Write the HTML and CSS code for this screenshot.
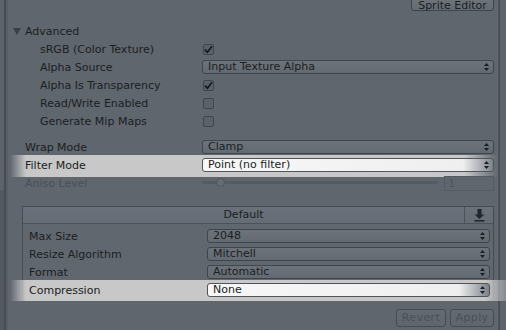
FILE: index.html
```html
<!DOCTYPE html>
<html>
<head>
<meta charset="utf-8">
<link rel="stylesheet" href="styles.css">
</head>
<body>
<div class="gutter-l"><div class="gl-top"></div><div class="gl-bot"></div></div>
<main class="inspector">
  <div class="topbar"><button class="btn sprite-btn">Sprite Editor</button></div>

  <div class="foldout"><span class="tri"></span>Advanced</div>
  <div class="row ind"><span class="lbl">sRGB (Color Texture)</span><span class="chk"><svg width="9" height="9" viewBox="0 0 9 9"><path d="M1 4.6 L3.4 7.2 L8 1.2" fill="none" stroke="#15181b" stroke-width="1.7"/></svg></span></div>
  <div class="row ind"><span class="lbl">Alpha Source</span><span class="dd">Input Texture Alpha<svg class="arr" width="5" height="8" viewBox="0 0 5 8"><path d="M0 3 L2.5 0 L5 3Z M0 5 L5 5 L2.5 8Z" fill="#1b1e22"/></svg></span></div>
  <div class="row ind"><span class="lbl">Alpha Is Transparency</span><span class="chk"><svg width="9" height="9" viewBox="0 0 9 9"><path d="M1 4.6 L3.4 7.2 L8 1.2" fill="none" stroke="#15181b" stroke-width="1.7"/></svg></span></div>
  <div class="row ind"><span class="lbl">Read/Write Enabled</span><span class="chk"></span></div>
  <div class="row ind"><span class="lbl">Generate Mip Maps</span><span class="chk"></span></div>

  <div class="row gap"><span class="lbl">Wrap Mode</span><span class="dd">Clamp<svg class="arr" width="5" height="8" viewBox="0 0 5 8"><path d="M0 3 L2.5 0 L5 3Z M0 5 L5 5 L2.5 8Z" fill="#1b1e22"/></svg></span></div>
  <div class="row hl"><span class="lbl">Filter Mode</span><span class="dd">Point (no filter)<svg class="arr" width="5" height="8" viewBox="0 0 5 8"><path d="M0 3 L2.5 0 L5 3Z M0 5 L5 5 L2.5 8Z" fill="#1b1e22"/></svg></span></div>
  <div class="row dis"><span class="lbl">Aniso Level</span><span class="slider"><span class="track"></span><span class="thumb"></span></span><span class="num">1</span></div>

  <section class="platform">
    <div class="ph"><span class="ph-title">Default</span><span class="ph-btn"><svg width="11" height="13" viewBox="0 0 11 13"><path d="M3.5 0 H7.5 V5.5 H10.5 L5.5 10 L0.5 5.5 H3.5Z" fill="#22262b"/><rect x="0.5" y="11" width="10" height="1.6" fill="#22262b"/></svg></span></div>
    <div class="prow"><span class="lbl">Max Size</span><span class="dd">2048<svg class="arr" width="5" height="8" viewBox="0 0 5 8"><path d="M0 3 L2.5 0 L5 3Z M0 5 L5 5 L2.5 8Z" fill="#1b1e22"/></svg></span></div>
    <div class="prow"><span class="lbl">Resize Algorithm</span><span class="dd">Mitchell<svg class="arr" width="5" height="8" viewBox="0 0 5 8"><path d="M0 3 L2.5 0 L5 3Z M0 5 L5 5 L2.5 8Z" fill="#1b1e22"/></svg></span></div>
    <div class="prow"><span class="lbl">Format</span><span class="dd">Automatic<svg class="arr" width="5" height="8" viewBox="0 0 5 8"><path d="M0 3 L2.5 0 L5 3Z M0 5 L5 5 L2.5 8Z" fill="#1b1e22"/></svg></span></div>
    <div class="prow hl hl-box"><span class="lbl">Compression</span><span class="dd">None<svg class="arr" width="5" height="8" viewBox="0 0 5 8"><path d="M0 3 L2.5 0 L5 3Z M0 5 L5 5 L2.5 8Z" fill="#1b1e22"/></svg></span></div>
  </section>

  <div class="actions"><button class="btn off revert">Revert</button><button class="btn off apply">Apply</button></div>
</main>
<div class="gutter-r"></div>
</body>
</html>
```

FILE: styles.css
```css
html, body {
  margin: 0;
  padding: 0;
}
body {
  width: 506px;
  height: 330px;
  overflow: hidden;
  display: flex;
  background: #60666e;
  font-family: "DejaVu Sans", sans-serif;
  font-size: 11px;
  color: #1b1e22;
}
.gutter-l {
  width: 8px;
  flex: none;
  display: flex;
  flex-direction: column;
  background: linear-gradient(90deg, #5d636b 0 4px, #474c53 4px 6px, #585e66 6px 8px);
}
.gl-top { height: 190px; }
.gl-bot {
  flex: 1;
  width: 4px;
  background: #545961;
}
.gutter-r {
  width: 9px;
  flex: none;
  background: linear-gradient(90deg, #676d75 0 1px, #4a4f56 1px 3px, #5e646c 3px 9px);
}
.inspector {
  flex: 1;
  min-width: 0;
  display: flex;
  flex-direction: column;
}
.topbar {
  height: 22px;
  display: flex;
  justify-content: flex-end;
  align-items: flex-start;
  padding-right: 3px;
}
.btn {
  font: inherit;
  color: #1b1e22;
  border: 1px solid #40454c;
  border-radius: 3px;
  background: linear-gradient(#6e747c, #656b73);
  padding: 0;
  margin: 0;
  box-sizing: border-box;
  display: flex;
  align-items: center;
  justify-content: center;
}
.sprite-btn {
  height: 14px;
  width: 83px;
  margin-top: -3px;
  line-height: 11px;
  padding-top: 3px;
}
.foldout {
  height: 18px;
  display: flex;
  align-items: center;
  padding-left: 5px;
  gap: 4px;
}
.tri {
  width: 0;
  height: 0;
  border-left: 4px solid transparent;
  border-right: 4px solid transparent;
  border-top: 7px solid #3b4047;
}
.row, .prow {
  height: 18px;
  display: flex;
  align-items: center;
  position: relative;
  padding-left: 17px;
  padding-right: 3px;
}
.lbl {
  width: 177px;
  flex: none;
  white-space: nowrap;
  position: relative;
  z-index: 1;
}
.row.ind { padding-left: 32px; }
.row.ind .lbl { width: 162px; }
.row.gap { margin-top: 8px; }
.chk {
  width: 11px;
  height: 11px;
  box-sizing: border-box;
  border: 1px solid #40454c;
  border-radius: 2px;
  background: #5b6168;
  margin-left: 1px;
  display: flex;
  align-items: center;
  justify-content: center;
}
.dd {
  flex: 1;
  height: 14px;
  box-sizing: border-box;
  border: 1px solid #40454c;
  border-radius: 3px;
  background: linear-gradient(#6d737b, #646a72);
  padding-left: 5px;
  padding-right: 4px;
  display: flex;
  align-items: center;
  justify-content: space-between;
  line-height: 12px;
  position: relative;
  z-index: 1;
  white-space: nowrap;
}
.hl::before {
  content: "";
  position: absolute;
  left: 2px;
  right: -1px;
  top: -1px;
  bottom: -3px;
  background: linear-gradient(90deg, rgba(201,201,201,0) 0, #c8c8c8 16px, #c8c8c8 calc(100% - 34px), rgba(201,201,201,0) 100%);
  z-index: 0;
}
.hl .dd {
  background: linear-gradient(90deg, #f7f7f7 0, #efefef calc(100% - 30px), #7d838b 100%);
  border-color: #50555c;
}
.dis { color: #4a5058; }
.slider {
  width: 236px;
  height: 14px;
  position: relative;
  flex: none;
}
.track {
  position: absolute;
  left: 0;
  right: 0;
  top: 5px;
  height: 3px;
  border-radius: 2px;
  background: #555b63;
}
.thumb {
  position: absolute;
  left: 14px;
  top: 2px;
  width: 9px;
  height: 9px;
  box-sizing: border-box;
  border-radius: 50%;
  border: 1px solid #4f555c;
  background: #666c74;
}
.num {
  margin-left: 6px;
  flex: 1;
  height: 15px;
  box-sizing: border-box;
  border: 1px solid #555b63;
  padding-left: 3px;
  line-height: 13px;
  color: #4f555d;
}
.platform {
  margin: 14px 3px 0 14px;
  border: 1px solid #464b52;
  padding-bottom: 1px;
  background: #61676f;
}
.ph {
  height: 16px;
  display: flex;
  border-bottom: 1px solid #4d525a;
  background: linear-gradient(#6b717a, #666c75);
}
.ph-title {
  flex: 1;
  text-align: center;
  line-height: 16px;
}
.ph-btn {
  width: 29px;
  border-left: 1px solid #4d525a;
  display: flex;
  align-items: center;
  justify-content: center;
  padding-top: 1px;
  box-sizing: border-box;
}
.prow {
  padding-left: 6px;
  padding-right: 3px;
}
.prow .lbl { width: 178px; }
.ph + .prow { margin-top: 3px; }
.hl-box::before {
  left: -13px;
  right: -26px;
  top: -1px;
  bottom: -2px;
}
.actions {
  display: flex;
  justify-content: flex-end;
  gap: 4px;
  padding-right: 3px;
  margin-top: 8px;
}
.btn.off {
  height: 18px;
  color: #4a5058;
  border-color: #474c53;
  background: linear-gradient(#646a72, #5f656d);
  letter-spacing: 0.4px;
  line-height: 16px;
}
.revert { width: 50px; }
.apply { width: 44px; }
```
